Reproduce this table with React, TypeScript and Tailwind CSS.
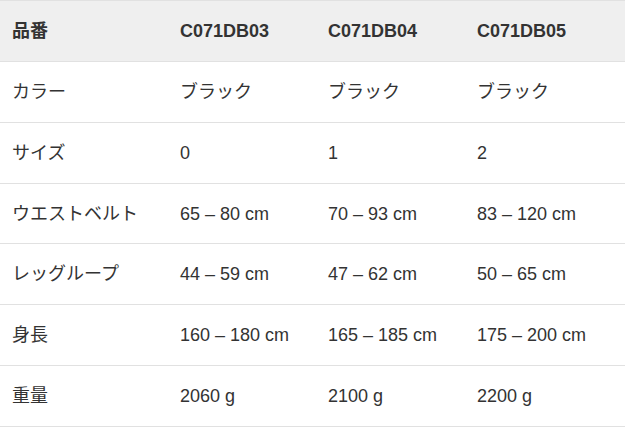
const header = ['品番', 'C071DB03', 'C071DB04', 'C071DB05']

const rows = [
  ['カラー', 'ブラック', 'ブラック', 'ブラック'],
  ['サイズ', '0', '1', '2'],
  ['ウエストベルト', '65 – 80 cm', '70 – 93 cm', '83 – 120 cm'],
  ['レッグループ', '44 – 59 cm', '47 – 62 cm', '50 – 65 cm'],
  ['身長', '160 – 180 cm', '165 – 185 cm', '175 – 200 cm'],
  ['重量', '2060 g', '2100 g', '2200 g'],
]

const cols = 'grid grid-cols-[168px_148px_149px_1fr]'

export default function App() {
  return (
    <div className="w-[625px] bg-white font-['Liberation_Sans','Noto_Sans_CJK_JP',sans-serif] text-[18px] text-[#333333]">
      <div className={`${cols} h-[62px] items-center border-y border-[#e1e1e1] bg-[#efefef] font-bold`}>
        {header.map((h, i) => (
          <div key={i} className="pl-3 leading-none">
            {h}
          </div>
        ))}
      </div>
      {rows.map((r, ri) => (
        <div key={ri} className={`${cols} h-[60.83px] items-center border-b border-[#e1e1e1]`}>
          {r.map((c, ci) => (
            <div key={ci} className="pl-3 leading-none whitespace-nowrap">
              {c}
            </div>
          ))}
        </div>
      ))}
    </div>
  )
}
